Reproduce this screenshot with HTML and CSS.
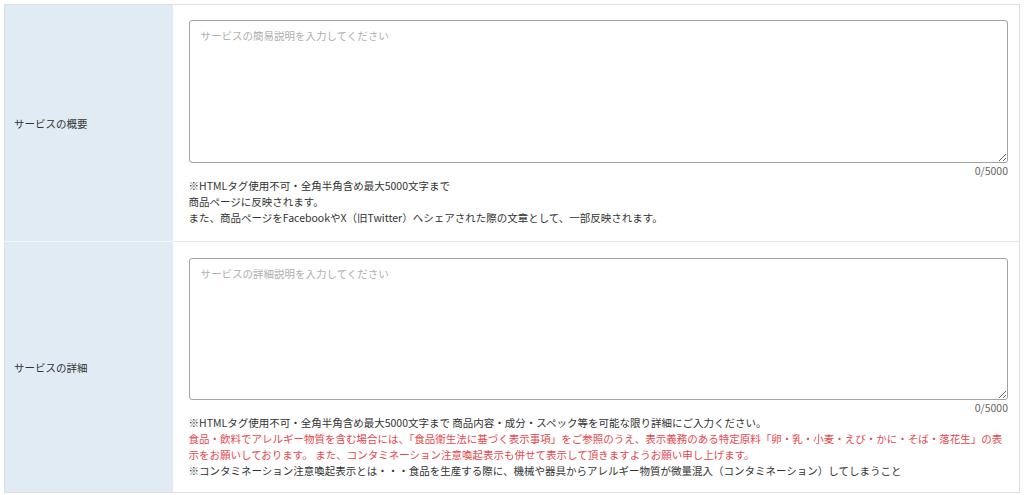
FILE: index.html
```
<!DOCTYPE html>
<html lang="ja">
<head>
<meta charset="utf-8">
<link rel="stylesheet" href="styles.css">
</head>
<body>
<div class="wrap">
  <table class="form">
    <tr class="row row-1">
      <th class="label">サービスの概要</th>
      <td class="field">
        <textarea class="input input-1" placeholder="サービスの簡易説明を入力してください"></textarea>
        <div class="count">0/5000</div>
        <div class="notes">
          <p>※HTMLタグ使用不可・全角半角含め最大5000文字まで</p>
          <p>商品ページに反映されます。</p>
          <p>また、商品ページをFacebookやX（旧Twitter）へシェアされた際の文章として、一部反映されます。</p>
        </div>
      </td>
    </tr>
    <tr class="row row-2">
      <th class="label">サービスの詳細</th>
      <td class="field">
        <textarea class="input input-2" placeholder="サービスの詳細説明を入力してください"></textarea>
        <div class="count">0/5000</div>
        <div class="notes">
          <p>※HTMLタグ使用不可・全角半角含め最大5000文字まで 商品内容・成分・スペック等を可能な限り詳細にご入力ください。</p>
          <p class="warn">食品・飲料でアレルギー物質を含む場合には、「食品衛生法に基づく表示事項」をご参照のうえ、表示義務のある特定原料「卵・乳・小麦・えび・かに・そば・落花生」の表示をお願いしております。 また、コンタミネーション注意喚起表示も併せて表示して頂きますようお願い申し上げます。</p>
          <p>※コンタミネーション注意喚起表示とは・・・食品を生産する際に、機械や器具からアレルギー物質が微量混入（コンタミネーション）してしまうこと</p>
        </div>
      </td>
    </tr>
  </table>
</div>
</body>
</html>
```
FILE: styles.css
```
* { box-sizing: border-box; }
html, body { margin: 0; padding: 0; background: #fff; }
body {
  font-family: "Noto Sans CJK JP", "Noto Sans", sans-serif;
  font-size: 10.5px;
  color: #333;
}
.wrap { padding: 4px 4px 0 4px; }
.form {
  width: 1016px;
  border-collapse: collapse;
  border: 1px solid #dedede;
}
.row + .row { border-top: 1px solid #e6e6e6; }
.label {
  width: 168px;
  background: #e1ebf4;
  text-align: left;
  font-weight: normal;
  padding: 0 0 0 9px;
  vertical-align: middle;
  border-right: 0;
}
.row + .row .label { border-top: 1px solid #f3f6fa; }
.field {
  padding: 15px 11px 15px 16px;
  vertical-align: top;
}
.row-2 .field { padding-top: 16px; padding-bottom: 13px; }
.input {
  display: block;
  width: 100%;
  margin: 0;
  border: 1px solid #a3a3a3;
  border-radius: 3px;
  padding: 7px 11px;
  font-family: inherit;
  font-size: 10.5px;
  color: #333;
  resize: vertical;
  background: #fff;
}
.input-1 { height: 143px; }
.input-2 { height: 142px; }
.input::placeholder { color: #b0b0b0; }
.count {
  text-align: right;
  color: #666;
  line-height: 15px;
}
.notes p {
  margin: 0;
  line-height: 16px;
}
.notes .warn { color: #e5484d; }
```
